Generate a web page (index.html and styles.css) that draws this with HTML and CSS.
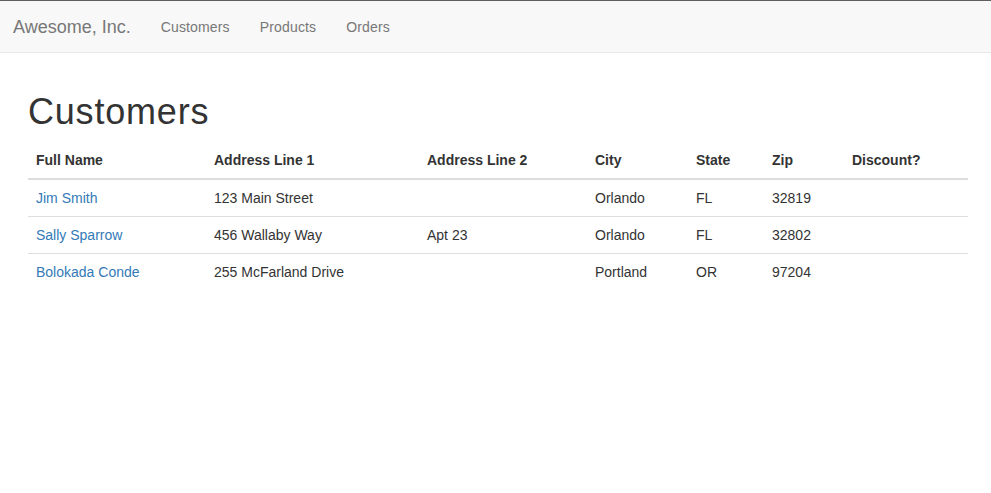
FILE: index.html
```html
<!DOCTYPE html>
<html>
<head>
<meta charset="utf-8">
<link rel="stylesheet" href="styles.css">
</head>
<body>
<nav class="navbar">
  <a class="brand" href="#">Awesome, Inc.</a>
  <ul class="nav">
    <li><a href="#">Customers</a></li>
    <li><a href="#">Products</a></li>
    <li><a href="#">Orders</a></li>
  </ul>
</nav>
<main class="content">
  <h1>Customers</h1>
  <table class="table">
    <colgroup>
      <col class="c1"><col class="c2"><col class="c3"><col class="c4"><col class="c5"><col class="c6"><col class="c7">
    </colgroup>
    <thead>
      <tr><th>Full Name</th><th>Address Line 1</th><th>Address Line 2</th><th>City</th><th>State</th><th>Zip</th><th>Discount?</th></tr>
    </thead>
    <tbody>
      <tr><td><a href="#">Jim Smith</a></td><td>123 Main Street</td><td></td><td>Orlando</td><td>FL</td><td>32819</td><td></td></tr>
      <tr><td><a href="#">Sally Sparrow</a></td><td>456 Wallaby Way</td><td>Apt 23</td><td>Orlando</td><td>FL</td><td>32802</td><td></td></tr>
      <tr><td><a href="#">Bolokada Conde</a></td><td>255 McFarland Drive</td><td></td><td>Portland</td><td>OR</td><td>97204</td><td></td></tr>
    </tbody>
  </table>
</main>
</body>
</html>
```

FILE: styles.css
```css
* { box-sizing: border-box; }
html, body { margin: 0; padding: 0; }
body {
  font-family: "Liberation Sans", Arial, sans-serif;
  font-size: 14px;
  line-height: 20px;
  color: #333;
  background: #fff;
  border-top: 1px solid #5e5e5e;
}
a { color: #337ab7; text-decoration: none; }
.navbar {
  display: flex;
  align-items: center;
  height: 52px;
  background: #f8f8f8;
  border-bottom: 1px solid #e7e7e7;
}
.brand {
  font-size: 18px;
  line-height: 20px;
  color: #777;
  padding: 15px 15px 15px 13px;
}
.nav {
  display: flex;
  list-style: none;
  margin: 0;
  padding: 0;
}
.nav a {
  display: block;
  color: #777;
  padding: 15px 15px;
  line-height: 20px;
  letter-spacing: 0.15px;
}
.content {
  padding: 0 23px 0 28px;
}
h1 {
  font-size: 36px;
  font-weight: 500;
  line-height: 40px;
  letter-spacing: 0.8px;
  margin: 39px 0 10px;
}
.table {
  width: 940px;
  border-collapse: collapse;
  table-layout: fixed;
}
.c1 { width: 178px; }
.c2 { width: 213px; }
.c3 { width: 168px; }
.c4 { width: 101px; }
.c5 { width: 76px; }
.c6 { width: 80px; }
.c7 { width: 124px; }
th, td {
  text-align: left;
  padding: 8px;
  line-height: 20px;
  vertical-align: top;
}
th {
  font-weight: bold;
  border-bottom: 2px solid #ddd;
}
tbody td { border-top: 1px solid #ddd; }
tbody tr:first-child td { border-top: 0; }
```
